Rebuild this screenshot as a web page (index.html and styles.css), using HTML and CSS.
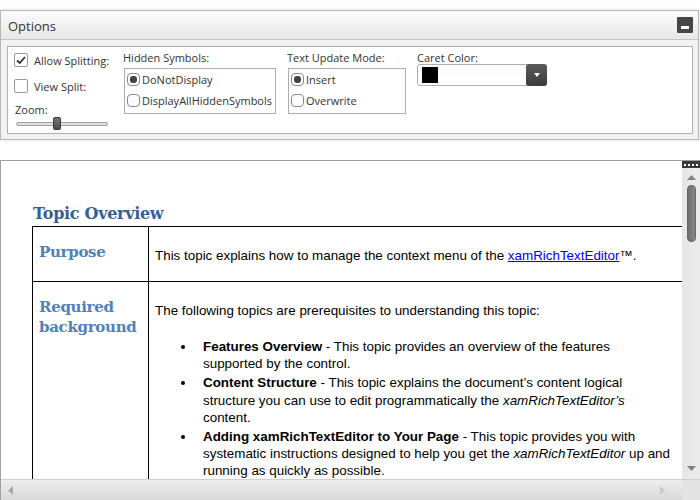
FILE: index.html
```html
<!DOCTYPE html>
<html>
<head>
<meta charset="utf-8">
<link rel="stylesheet" href="styles.css">
</head>
<body>
<div class="options">
  <div class="opt-head">
    <span class="opt-title">Options</span>
    <span class="min-btn"><span class="min-bar"></span></span>
  </div>
  <div class="opt-body">
    <div class="opt-inner">
      <div class="col col1">
        <div class="check-row"><span class="cbox"><svg width="12" height="12" viewBox="0 0 12 12"><path d="M2 6.5 L4.8 9 L10 3" fill="none" stroke="#333" stroke-width="1.8"/></svg></span><span>Allow Splitting:</span></div>
        <div class="check-row"><span class="cbox"></span><span>View Split:</span></div>
        <div class="zoom-label">Zoom:</div>
        <div class="slider"><span class="track"></span><span class="thumb"></span></div>
      </div>
      <div class="col col2">
        <div class="grp-label">Hidden Symbols:</div>
        <div class="grp-box">
          <div class="radio-row"><span class="radio on"></span>DoNotDisplay</div>
          <div class="radio-row"><span class="radio"></span>DisplayAllHiddenSymbols</div>
        </div>
      </div>
      <div class="col col3">
        <div class="grp-label">Text Update Mode:</div>
        <div class="grp-box box3">
          <div class="radio-row"><span class="radio on"></span>Insert</div>
          <div class="radio-row"><span class="radio"></span>Overwrite</div>
        </div>
      </div>
      <div class="col col4">
        <div class="grp-label">Caret Color:</div>
        <div class="combo"><span class="swatch"></span><span class="combo-btn"><svg width="8" height="6" viewBox="0 0 8 6"><path d="M1 1 H7 L4 5 Z" fill="#fff"/></svg></span></div>
      </div>
    </div>
  </div>
</div>

<div class="doc">
  <div class="page">
    <h1 class="topic">Topic Overview</h1>
    <div class="tbl">
      <div class="cell hcell r1">Purpose</div>
      <div class="cell bcell r1"><p class="p1">This topic explains how to manage the context menu of the <a href="#">xamRichTextEditor</a>™.</p></div>
      <div class="cell hcell r2">Required background</div>
      <div class="cell bcell r2">
        <p class="p2">The following topics are prerequisites to understanding this topic:</p>
        <ul class="list">
          <li><b>Features Overview</b> - This topic provides an overview of the features<br>supported by the control.</li>
          <li><b>Content Structure</b> - This topic explains the document’s content logical<br>structure you can use to edit programmatically the <i>xamRichTextEditor’s</i><br>content.</li>
          <li><b>Adding xamRichTextEditor to Your Page</b> - This topic provides you with<br>systematic instructions designed to help you get the <i>xamRichTextEditor</i> up and<br>running as quickly as possible.</li>
        </ul>
      </div>
    </div>
  </div>
  <div class="vscroll">
    <div class="grip"><span></span><span></span><span></span><span></span></div>
    <div class="vtrack">
      <svg class="arr-up" width="9" height="5" viewBox="0 0 9 5"><path d="M0 5 L4.5 0 L9 5 Z" fill="#808080"/></svg>
      <div class="vthumb"></div>
      <svg class="arr-down" width="9" height="5" viewBox="0 0 9 5"><path d="M0 0 L9 0 L4.5 5 Z" fill="#808080"/></svg>
    </div>
  </div>
  <div class="hscroll">
    <svg width="5" height="9" viewBox="0 0 5 9"><path d="M5 0 L0 4.5 L5 9 Z" fill="#a8a8a8"/></svg>
    <svg width="5" height="9" viewBox="0 0 5 9"><path d="M0 0 L5 4.5 L0 9 Z" fill="#c8c8c8"/></svg>
  </div>
  <div class="corner"></div>
</div>
</body>
</html>
```
FILE: styles.css
```css
html, body {
  margin: 0;
  padding: 0;
  background: #ffffff;
}
body {
  width: 700px;
  height: 500px;
  overflow: hidden;
  font-family: "Open Sans", "Noto Sans", sans-serif;
  color: #222;
}
.options {
  margin: 10px 1px 0 0;
  border: 1px solid #b8b8b8;
  box-shadow: 0 0 4px rgba(0,0,0,0.12);
  background: #f2f2f2;
}
.opt-head {
  height: 28px;
  display: flex;
  align-items: center;
  justify-content: space-between;
  padding: 0 5px 0 7px;
  background: linear-gradient(#fbfbfb, #e8e8e8);
  border-bottom: 1px solid #c4c4c4;
}
.opt-title {
  font-size: 13px;
  color: #333;
  margin-top: 1px;
}
.min-btn {
  width: 16px;
  height: 16px;
  background: #464646;
  border-radius: 1px;
  display: flex;
  align-items: flex-end;
  justify-content: center;
  box-sizing: border-box;
  padding-bottom: 4px;
}
.min-bar {
  width: 8px;
  height: 3px;
  background: #fff;
}
.opt-body {
  padding: 6px 5px 5px 6px;
}
.opt-inner {
  background: #fff;
  border: 1px solid #b0b0b0;
  height: 86px;
  display: flex;
  font-size: 11px;
  color: #333;
}
.col1 {
  padding: 6px 0 0 6px;
  width: 103px;
}
.check-row {
  display: flex;
  align-items: center;
  gap: 6px;
  height: 14px;
  margin-bottom: 12px;
}
.cbox {
  width: 12px;
  height: 12px;
  border: 1px solid #9a9a9a;
  border-radius: 2px;
  background: #fff;
  display: flex;
  align-items: center;
  justify-content: center;
}
.zoom-label {
  margin-top: -2px;
  padding-left: 1px;
  line-height: 13px;
}
.slider {
  position: relative;
  width: 92px;
  height: 12px;
  margin-top: 1px;
  margin-left: 2px;
}
.track {
  position: absolute;
  left: 0;
  right: 0;
  top: 5px;
  height: 2px;
  border: 1px solid #a0a0a0;
  border-radius: 2px;
  background: #e0e0e0;
}
.thumb {
  position: absolute;
  left: 37px;
  top: 0;
  width: 6px;
  height: 11px;
  background: linear-gradient(#777, #4a4a4a);
  border: 1px solid #3a3a3a;
  border-radius: 2px;
}
.col2 {
  padding: 4px 0 0 0;
  margin-left: 6px;
}
.col3 {
  padding: 4px 0 0 0;
  margin-left: 11px;
}
.col4 {
  padding: 4px 0 0 0;
  margin-left: 11px;
}
.grp-label {
  line-height: 13px;
  height: 17px;
}
.grp-box {
  border: 1px solid #adadad;
  width: 152px;
  height: 46px;
  box-sizing: border-box;
  padding: 3px 0 0 2px;
  margin-left: 1px;
}
.box3 {
  width: 118px;
}
.radio-row {
  display: flex;
  align-items: center;
  gap: 2px;
  height: 14px;
  margin-bottom: 7px;
  white-space: nowrap;
}
.radio {
  width: 11px;
  height: 11px;
  border: 1px solid #8a8a8a;
  border-radius: 4px;
  background: #fff;
  display: flex;
  align-items: center;
  justify-content: center;
}
.radio.on::after {
  content: "";
  width: 7px;
  height: 7px;
  border-radius: 3px;
  background: #444;
}
.combo {
  margin-top: -4px;
  width: 130px;
  height: 22px;
  box-sizing: border-box;
  border: 1px solid #b0b0b0;
  border-radius: 3px;
  display: flex;
  align-items: center;
  justify-content: space-between;
  padding-left: 4px;
  background: linear-gradient(#fafafa, #fff);
}
.swatch {
  width: 16px;
  height: 16px;
  background: #000;
}
.combo-btn {
  width: 21px;
  height: 22px;
  margin-right: -1px;
  background: linear-gradient(#5a5a5a, #3c3c3c);
  border-radius: 3px;
  display: flex;
  align-items: center;
  justify-content: center;
}

/* document */
.doc {
  margin-top: 20px;
  height: 340px;
  border-left: 1px solid #a0a0a0;
  border-top: 1px solid #a0a0a0;
  display: grid;
  grid-template-columns: 1fr 18px;
  grid-template-rows: 318px 21px;
  box-sizing: border-box;
}
.page {
  overflow: hidden;
  padding: 42px 0 0 31px;
  background: #fff;
}
.topic {
  margin: 0 0 0 1px;
  font-family: "DejaVu Serif", "Liberation Serif", serif;
  font-weight: bold;
  font-size: 16px;
  color: #365f91;
  line-height: 22px;
  height: 23px;
  letter-spacing: -0.3px;
}
.tbl {
  display: grid;
  grid-template-columns: 116px 540px;
  grid-template-rows: 55px auto;
  border-top: 1px solid #000;
  border-left: 1px solid #000;
  font-family: "Liberation Sans", sans-serif;
  font-size: 13.4px;
  color: #000;
}
.cell {
  border-right: 1px solid #000;
  border-bottom: 1px solid #000;
}
.hcell {
  padding: 15px 6px 0 6px;
  font-family: "DejaVu Serif", "Liberation Serif", serif;
  font-weight: bold;
  font-size: 15px;
  line-height: 20px;
  color: #4f81bd;
  letter-spacing: -0.3px;
}
.bcell {
  padding-left: 6px;
}
.p1 {
  margin: 20px 0 0 0;
  line-height: 17px;
}
.p1 a {
  color: #0000ff;
}
.p2 {
  margin: 20px 0 0 0;
  line-height: 17px;
}
.list {
  margin: 19px 0 0 0;
  padding-left: 41px;
  width: 528px;
  line-height: 17.2px;
  white-space: nowrap;
}
.list li {
  margin-bottom: 2px;
  padding-left: 7px;
}

.vscroll {
  background: #e9e9e9;
  display: flex;
  flex-direction: column;
}
.grip {
  height: 7px;
  background: #3a3a3a;
  display: flex;
  align-items: center;
  justify-content: center;
  gap: 2px;
}
.grip span {
  width: 2px;
  height: 2px;
  background: #fff;
}
.vtrack {
  flex: 1;
  display: flex;
  flex-direction: column;
  align-items: center;
  padding-top: 7px;
  background: linear-gradient(90deg, #e6e6e6, #ececec);
}
.vthumb {
  width: 9px;
  height: 57px;
  margin-top: 5px;
  border-radius: 4px;
  background: linear-gradient(90deg, #6e6e6e, #888);
  border: 1px solid #666;
  box-sizing: border-box;
}
.arr-down {
  margin-top: auto;
  margin-bottom: 8px;
}
.hscroll {
  background: linear-gradient(#ededed, #d9d9d9);
  border-top: 1px solid #d0d0d0;
  display: flex;
  align-items: center;
  justify-content: space-between;
  padding: 0 17px 0 7px;
}
.corner {
  background: #e4e4e4;
  border-top: 1px solid #d0d0d0;
}
```
